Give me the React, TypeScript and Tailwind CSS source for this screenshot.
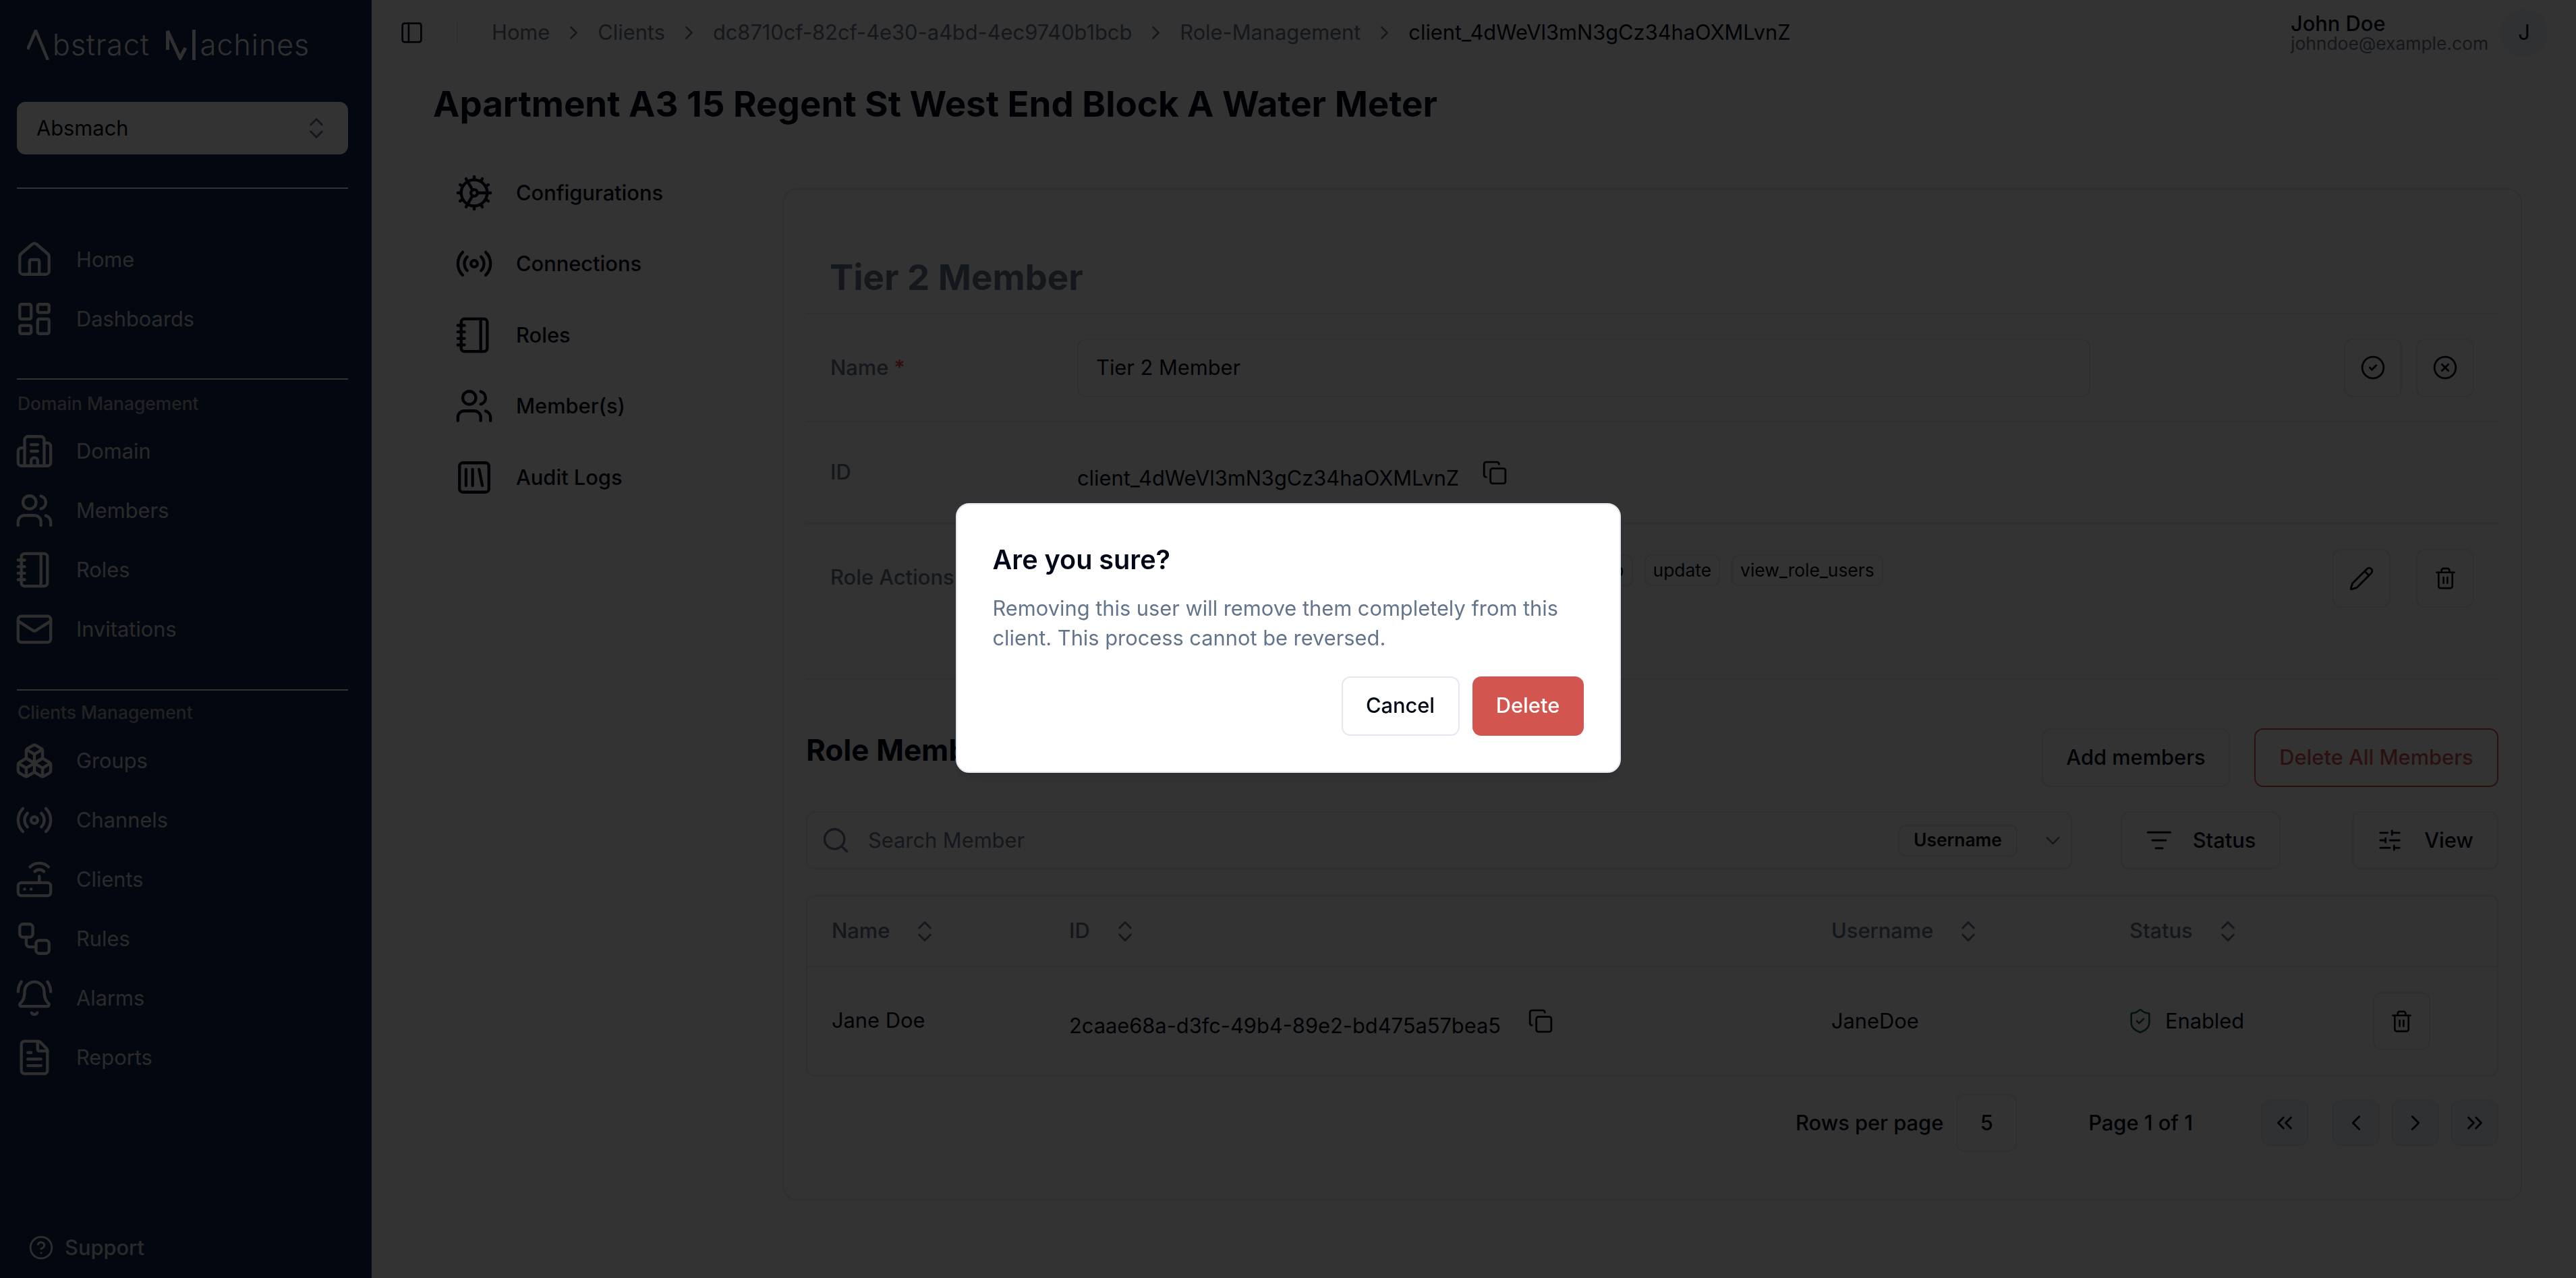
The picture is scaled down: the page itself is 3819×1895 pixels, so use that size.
import {
  Boxes,
  Building2,
  BellRing,
  ChevronDown,
  ChevronLeft,
  ChevronRight,
  ChevronsLeft,
  ChevronsRight,
  ChevronsUpDown,
  CircleCheck,
  CircleHelp,
  CircleX,
  Cog,
  Copy,
  FileText,
  House,
  LayoutDashboard,
  ListFilter,
  Mail,
  Notebook,
  PanelLeft,
  Pencil,
  Radio,
  Router,
  Search,
  ShieldCheck,
  SlidersHorizontal,
  SquareLibrary,
  Trash2,
  Users,
  Workflow,
} from 'lucide-react';
import type { LucideIcon } from 'lucide-react';

function NavRow({ icon: Icon, label }: { icon: LucideIcon; label: string }) {
  return (
    <div className="flex h-[88px] items-center pl-[22px] text-[30.8px] text-[#d0d0d0]">
      <Icon size={58} strokeWidth={1.8} className="shrink-0 text-[#e6e6e6]" />
      <span className="ml-[33px]">{label}</span>
    </div>
  );
}

function Logo() {
  return (
    <div className="flex items-end pl-[40px] pt-[44px] text-[#f0f0f0]">
      <svg width="34" height="45" viewBox="0 0 34 45" fill="none" stroke="currentColor" strokeWidth="4.5" className="shrink-0">
        <path d="M1 29 L13 1.5 L31 45" />
      </svg>
      <span className="ml-[4px] text-[43px] font-light leading-[45px] tracking-[1px]">bstract</span>
      <svg width="45" height="45" viewBox="0 0 45 45" fill="none" stroke="currentColor" strokeWidth="5" className="ml-[24px] shrink-0">
        <path d="M2.5 30 V2 L21 42 L29 27" />
        <path d="M41.5 0 V45" />
      </svg>
      <span className="ml-[6px] text-[43px] font-light leading-[45px] tracking-[1px]">achines</span>
    </div>
  );
}

function Sidebar() {
  return (
    <aside className="flex h-[1895px] w-[551px] shrink-0 flex-col bg-[#122c50]">
      <div className="h-[151px]">
        <Logo />
      </div>
      <div className="ml-[25px] mr-[35px] flex h-[78px] items-center justify-between rounded-[13px] bg-white pl-[29px] pr-[27px] text-[30.8px] text-[#020817]">
        <span>Absmach</span>
        <ChevronsUpDown size={40} strokeWidth={1.8} className="text-[#64748b]" />
      </div>
      <div className="ml-[25px] mr-[35px] mt-[49px] h-[2px] bg-white" />
      <nav className="mt-[61px]">
        <NavRow icon={House} label="Home" />
        <NavRow icon={LayoutDashboard} label="Dashboards" />
      </nav>
      <div className="ml-[25px] mr-[35px] mt-[44px] h-[2px] bg-white" />
      <div className="mt-[14px] flex h-[44px] items-center pl-[26px] text-[26.4px] font-medium text-[#a8a8a8]">Domain Management</div>
      <nav className="mt-[4px]">
        <NavRow icon={Building2} label="Domain" />
        <NavRow icon={Users} label="Members" />
        <NavRow icon={Notebook} label="Roles" />
        <NavRow icon={Mail} label="Invitations" />
      </nav>
      <div className="ml-[25px] mr-[35px] mt-[45px] h-[2px] bg-white" />
      <div className="mt-[11px] flex h-[44px] items-center pl-[26px] text-[26.4px] font-medium text-[#a8a8a8]">Clients Management</div>
      <nav className="mt-[5px]">
        <NavRow icon={Boxes} label="Groups" />
        <NavRow icon={Radio} label="Channels" />
        <NavRow icon={Router} label="Clients" />
        <NavRow icon={Workflow} label="Rules" />
        <NavRow icon={BellRing} label="Alarms" />
        <NavRow icon={FileText} label="Reports" />
      </nav>
      <div className="mb-[23px] mt-auto flex h-[44px] items-center gap-[16px] pl-[42px] text-[30.8px] font-medium text-[#d0d0d0]">
        <CircleHelp size={38} strokeWidth={1.8} className="text-[#e6e6e6]" />
        <span>Support</span>
      </div>
    </aside>
  );
}

function Header() {
  const crumbs = ['Home', 'Clients', 'dc8710cf-82cf-4e30-a4bd-4ec9740b1bcb', 'Role-Management'];
  return (
    <header className="flex h-[97px] items-center justify-between pl-[41px] pr-[42px]">
      <div className="flex items-center">
        <PanelLeft size={37} strokeWidth={1.7} className="text-[#020817]" />
        <div className="ml-[48px] h-[33px] w-[2px] bg-[#e2e8f0]" />
        <div className="ml-[50px] flex items-center gap-[19px] text-[30.8px] text-[#64748b]">
          {crumbs.map((crumb) => (
            <div key={crumb} className="flex items-center gap-[19px]">
              <span>{crumb}</span>
              <ChevronRight size={33} strokeWidth={1.8} />
            </div>
          ))}
          <span className="text-[#020817]">client_4dWeVl3mN3gCz34haOXMLvnZ</span>
        </div>
      </div>
      <div className="flex items-center gap-[18px]">
        <div>
          <div className="text-[30.8px] font-medium leading-[31px] text-[#020817]">John Doe</div>
          <div className="text-[26.4px] leading-[28px] text-[#64748b]">johndoe@example.com</div>
        </div>
        <div className="flex h-[70px] w-[70px] items-center justify-center rounded-full bg-[#f1f5f9] text-[30.8px] text-[#020817]">J</div>
      </div>
    </header>
  );
}

function TabRow({ icon: Icon, label }: { icon: LucideIcon; label: string }) {
  return (
    <div className="flex h-[105.5px] items-center text-[30.8px] font-medium text-[#020817]">
      <Icon size={58} strokeWidth={1.8} className="shrink-0" />
      <span className="ml-[33px]">{label}</span>
    </div>
  );
}

function IconButton({ icon: Icon, size = 38 }: { icon: LucideIcon; size?: number }) {
  return (
    <button className="flex h-[87px] w-[86px] items-center justify-center rounded-[13px] border-2 border-[#e2e8f0] text-[#020817]">
      <Icon size={size} strokeWidth={1.8} />
    </button>
  );
}

function Chip({ label }: { label: string }) {
  return (
    <span className="flex h-[47px] items-center rounded-[11px] border-2 border-[#e2e8f0] px-[11px] text-[26.4px] text-[#020817]">
      {label}
    </span>
  );
}

function SortHead({ label }: { label: string }) {
  return (
    <div className="flex items-center gap-[32px] text-[30.8px] font-medium text-[#64748b]">
      <span>{label}</span>
      <ChevronsUpDown size={40} strokeWidth={1.8} />
    </div>
  );
}

function PageButton({ icon: Icon }: { icon: LucideIcon }) {
  return (
    <button className="flex h-[68px] w-[70px] items-center justify-center rounded-[13px] border-2 border-[#e2e8f0] bg-[#f1f5f9] text-[#020817]">
      <Icon size={38} strokeWidth={1.8} />
    </button>
  );
}

function RoleDetails() {
  return (
    <div className="px-[33px]">
      <div className="border-b-2 border-[#e2e8f0] pb-[13px] pl-[35px] pt-[91px] text-[52.8px] font-bold leading-[79px] text-[#64748b]">
        Tier 2 Member
      </div>
      <div className="flex h-[160px] items-center border-b-2 border-[#e2e8f0] px-[36px] text-[30.8px]">
        <div className="w-[366px] font-medium text-[#64748b]">
          Name <span className="text-[#ef4444]">*</span>
        </div>
        <div className="flex h-[87px] w-[1502px] items-center rounded-[13px] border-2 border-[#e2e8f0] pl-[26px] text-[#020817]">Tier 2 Member</div>
        <div className="ml-auto flex gap-[21px]">
          <IconButton icon={CircleCheck} />
          <IconButton icon={CircleX} />
        </div>
      </div>
      <div className="flex h-[151px] items-center border-b-2 border-[#e2e8f0] px-[36px] text-[30.8px]">
        <div className="w-[366px] font-medium text-[#64748b]">ID</div>
        <span className="mt-[18px] text-[#020817]">client_4dWeVl3mN3gCz34haOXMLvnZ</span>
        <Copy size={38} strokeWidth={1.8} className="ml-[34px] text-[#020817]" />
      </div>
      <div className="flex h-[231px] items-start border-b-2 border-[#e2e8f0] px-[36px] pt-[37px] text-[30.8px]">
        <div className="mt-[19px] w-[366px] font-medium text-[#64748b]">Role Actions</div>
        {/* the first chips sit under the dialog, only the tail of the list shows */}
        <div className="ml-[581px] mt-[8px] flex gap-[17px]">
          <Chip label="set_parent_group" />
          <Chip label="update" />
          <Chip label="view_role_users" />
        </div>
        <div className="ml-auto flex gap-[38px]">
          <IconButton icon={Pencil} />
          <IconButton icon={Trash2} size={35} />
        </div>
      </div>
    </div>
  );
}

function RoleMembers() {
  return (
    <div className="px-[33px]">
      <div className="mt-[71px] flex items-center justify-between">
        <h2 className="mb-[22px] text-[44px] font-bold text-[#020817]">Role Members</h2>
        <div className="flex gap-[36px] text-[30.8px] font-medium">
          <button className="flex h-[87px] w-[279px] items-center justify-center rounded-[13px] border-2 border-[#e2e8f0] text-[#020817]">Add members</button>
          <button className="flex h-[87px] w-[362px] items-center justify-center rounded-[13px] border-2 border-[#d2554f] text-[#d2554f]">Delete All Members</button>
        </div>
      </div>

      <div className="mt-[36px] flex h-[86px] text-[30.8px]">
        <div className="flex w-[1877px] items-center rounded-[13px] border-2 border-[#e2e8f0] pl-[20px] text-[#64748b]">
          <Search size={44} strokeWidth={1.8} />
          <span className="ml-[26px]">Search Member</span>
          <span className="ml-auto flex h-[47px] w-[177px] items-center justify-center rounded-[11px] border-2 border-[#e2e8f0] text-[26.4px] font-semibold text-[#020817]">Username</span>
          <ChevronDown size={35} strokeWidth={1.8} className="ml-[35px] mr-[9px]" />
        </div>
        <button className="ml-[72px] flex w-[237px] items-center justify-center gap-[30px] rounded-[13px] border-2 border-[#e2e8f0] font-medium text-[#020817]">
          <ListFilter size={40} strokeWidth={1.8} />
          Status
        </button>
        <button className="ml-auto flex w-[217px] items-center justify-center gap-[32px] rounded-[13px] border-2 border-[#e2e8f0] font-medium text-[#020817]">
          <SlidersHorizontal size={38} strokeWidth={1.8} />
          View
        </button>
      </div>

      <div className="mt-[38px] overflow-hidden rounded-[13px] border-2 border-[#e2e8f0] text-[30.8px] text-[#020817]">
        <div className="grid h-[105px] grid-cols-[388px_1130px_442px_1fr] items-center border-b-2 border-[#e2e8f0]">
          <div className="pl-[36px]"><SortHead label="Name" /></div>
          <SortHead label="ID" />
          <SortHead label="Username" />
          <SortHead label="Status" />
        </div>
        <div className="grid h-[160px] grid-cols-[388px_1130px_442px_1fr] items-center">
          <div className="mb-[2px] pl-[36px]">Jane Doe</div>
          <div className="flex items-center">
            <span className="mt-[14px]">2caae68a-d3fc-49b4-89e2-bd475a57bea5</span>
            <Copy size={38} strokeWidth={1.8} className="ml-[40px]" />
          </div>
          <div>JaneDoe</div>
          <div className="flex items-center">
            <ShieldCheck size={40} strokeWidth={1.6} className="ml-[-4px] text-[#166534]" />
            <span className="ml-[17px]">Enabled</span>
            <button className="ml-auto mr-[99px] flex h-[86px] w-[85px] items-center justify-center rounded-[13px] border-2 border-[#e2e8f0]">
              <Trash2 size={35} strokeWidth={1.8} />
            </button>
          </div>
        </div>
      </div>

      <div className="mt-[26px] flex h-[86px] items-center justify-end text-[30.8px] font-medium text-[#020817]">
        <span>Rows per page</span>
        <div className="ml-[19px] flex h-[86px] w-[90px] items-center justify-center rounded-[13px] border-2 border-[#e2e8f0]">5</div>
        <span className="ml-[106px]">Page 1 of 1</span>
        <div className="ml-[101px]"><PageButton icon={ChevronsLeft} /></div>
        <div className="ml-[36px]"><PageButton icon={ChevronLeft} /></div>
        <div className="ml-[18px]"><PageButton icon={ChevronRight} /></div>
        <div className="ml-[18px]"><PageButton icon={ChevronsRight} /></div>
      </div>
    </div>
  );
}

function ConfirmDialog() {
  return (
    <div className="fixed inset-0 z-50 flex items-center justify-center bg-black/80">
      <div className="mb-[4px] h-[400px] w-[986px] rounded-[20px] border-2 border-[#e2e8f0] bg-white px-[53px] pt-[54px] shadow-lg">
        <h2 className="text-[39.6px] font-semibold leading-[56px] text-[#020817]">Are you sure?</h2>
        <p className="mt-[22px] text-[30.8px] leading-[44px] text-[#64748b]">
          Removing this user will remove them completely from this client. This process cannot be reversed.
        </p>
        <div className="mt-[35px] flex justify-end gap-[19px] text-[30.8px] font-medium">
          <button className="h-[88px] w-[175px] rounded-[13px] border-2 border-[#e2e8f0] bg-white text-[#020817]">Cancel</button>
          <button className="h-[88px] w-[165px] rounded-[13px] bg-[#d2554f] text-white">Delete</button>
        </div>
      </div>
    </div>
  );
}

export default function App() {
  return (
    <div className="flex h-[1895px] overflow-hidden bg-white font-['Inter',sans-serif]">
      <Sidebar />
      <main className="min-w-0 flex-1">
        <Header />
        <div className="pl-[91px] pr-[80px]">
          <h1 className="mt-[18px] text-[52.8px] font-bold leading-[79px] text-[#020817]">
            Apartment A3 15 Regent St West End Block A Water Meter
          </h1>
          <div className="mt-[39px] flex">
            <div className="w-[518px] shrink-0 pl-[32px]">
              <TabRow icon={Cog} label="Configurations" />
              <TabRow icon={Radio} label="Connections" />
              <TabRow icon={Notebook} label="Roles" />
              <TabRow icon={Users} label="Member(s)" />
              <TabRow icon={SquareLibrary} label="Audit Logs" />
            </div>
            <section className="mt-[46px] h-[1501px] flex-1 rounded-[22px] border-2 border-[#e2e8f0]">
              <RoleDetails />
              <RoleMembers />
            </section>
          </div>
        </div>
      </main>
      <ConfirmDialog />
    </div>
  );
}
